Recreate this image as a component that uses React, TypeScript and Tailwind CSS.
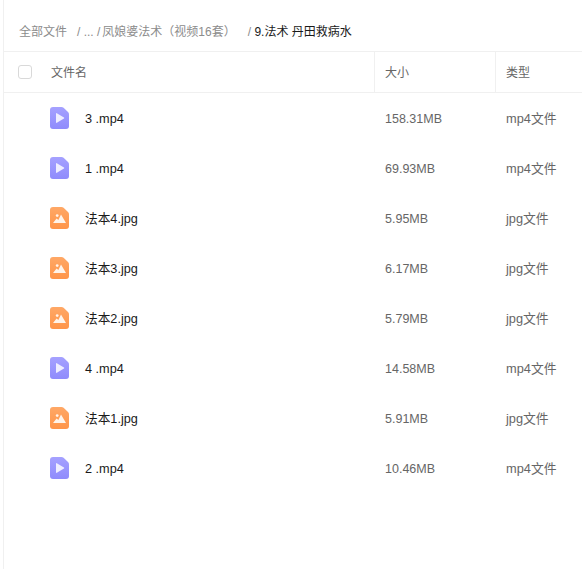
const files = [
  { name: '3 .mp4', size: '158.31MB', type: 'mp4文件', kind: 'video' },
  { name: '1 .mp4', size: '69.93MB', type: 'mp4文件', kind: 'video' },
  { name: '法本4.jpg', size: '5.95MB', type: 'jpg文件', kind: 'image' },
  { name: '法本3.jpg', size: '6.17MB', type: 'jpg文件', kind: 'image' },
  { name: '法本2.jpg', size: '5.79MB', type: 'jpg文件', kind: 'image' },
  { name: '4 .mp4', size: '14.58MB', type: 'mp4文件', kind: 'video' },
  { name: '法本1.jpg', size: '5.91MB', type: 'jpg文件', kind: 'image' },
  { name: '2 .mp4', size: '10.46MB', type: 'mp4文件', kind: 'video' },
]

const sheet = 'M3 0H11.5C12.3 0 13 .3 13.6 .8L18 5C18.6 5.6 19 6.4 19 7.2V19A3 3 0 0 1 16 22H3A3 3 0 0 1 0 19V3A3 3 0 0 1 3 0Z'

function VideoIcon() {
  return (
    <svg width="19" height="22" viewBox="0 0 19 22" className="shrink-0">
      <defs>
        <linearGradient id="videoFill" x1="0" y1="0" x2="0" y2="1">
          <stop offset="0%" stopColor="#a5a1ff" />
          <stop offset="100%" stopColor="#8f8bfc" />
        </linearGradient>
      </defs>
      <path d={sheet} fill="url(#videoFill)" />
      <path d="M6 6.6C6 6.2 6.4 6 6.8 6.2L14 10.5C14.3 10.7 14.3 11.2 14 11.4L6.8 15.8C6.4 16 6 15.8 6 15.4Z" fill="#eeedff" />
    </svg>
  )
}

function ImageIcon() {
  return (
    <svg width="19" height="22" viewBox="0 0 19 22" className="shrink-0">
      <defs>
        <linearGradient id="imageFill" x1="0" y1="0" x2="0" y2="1">
          <stop offset="0%" stopColor="#ffa866" />
          <stop offset="100%" stopColor="#ff9549" />
        </linearGradient>
      </defs>
      <path d={sheet} fill="url(#imageFill)" />
      <circle cx="7.2" cy="8.6" r="1.4" fill="#fff4ea" />
      <path d="M3 16L6.6 11.6L8.4 13L11 7.5L16 16Z" fill="#fff4ea" />
    </svg>
  )
}

export default function App() {
  return (
    <div className="h-[569px] w-[582px] overflow-hidden bg-white font-['Liberation_Sans','Noto_Sans_CJK_SC',sans-serif] text-[12.5px]">
      <div className="ml-[3px] h-full border-l border-[#f0f0f0]">
        <div className="flex h-[52px] items-center whitespace-pre border-b border-[#f0f0f0] pl-[15px] pt-[13px] text-[12px] text-[#8c8c8c]">
          <span>全部文件</span>
          <span className="ml-[10px]">/ ... /</span>
          <span className="ml-[2px]">凤娘婆法术（视频16套）</span>
          <span className="ml-[12px]">/ </span>
          <span className="text-[#1a1a1a]">9.法术 丹田救病水</span>
        </div>
        <div className="flex h-[41px] items-center border-b border-[#f0f0f0] text-[12px] text-[#666]">
          <div className="flex h-full w-[370px] items-center pl-[14px]">
            <span className="h-[14px] w-[14px] rounded-[3px] border border-[#d9d9d9]" />
            <span className="ml-[19px] pt-px">文件名</span>
          </div>
          <div className="flex h-full w-[121px] items-center border-l border-[#f0f0f0] pl-[10px] pt-px">大小</div>
          <div className="flex h-full flex-1 items-center border-l border-[#f0f0f0] pl-[10px] pt-px">类型</div>
        </div>
        {files.map((f) => (
          <div key={f.name} className="flex h-[50px] items-center">
            <div className="flex w-[370px] items-center pl-[46px] text-[12.7px] text-[#1a1a1a]">
              {f.kind === 'video' ? <VideoIcon /> : <ImageIcon />}
              <span className="ml-[16px] pt-[3px]">{f.name}</span>
            </div>
            <div className="w-[121px] pl-[11px] pt-[2px] text-[#666]">{f.size}</div>
            <div className="flex-1 pl-[11px] pt-[2px] text-[12.8px] text-[#666]">{f.type}</div>
          </div>
        ))}
      </div>
    </div>
  )
}
